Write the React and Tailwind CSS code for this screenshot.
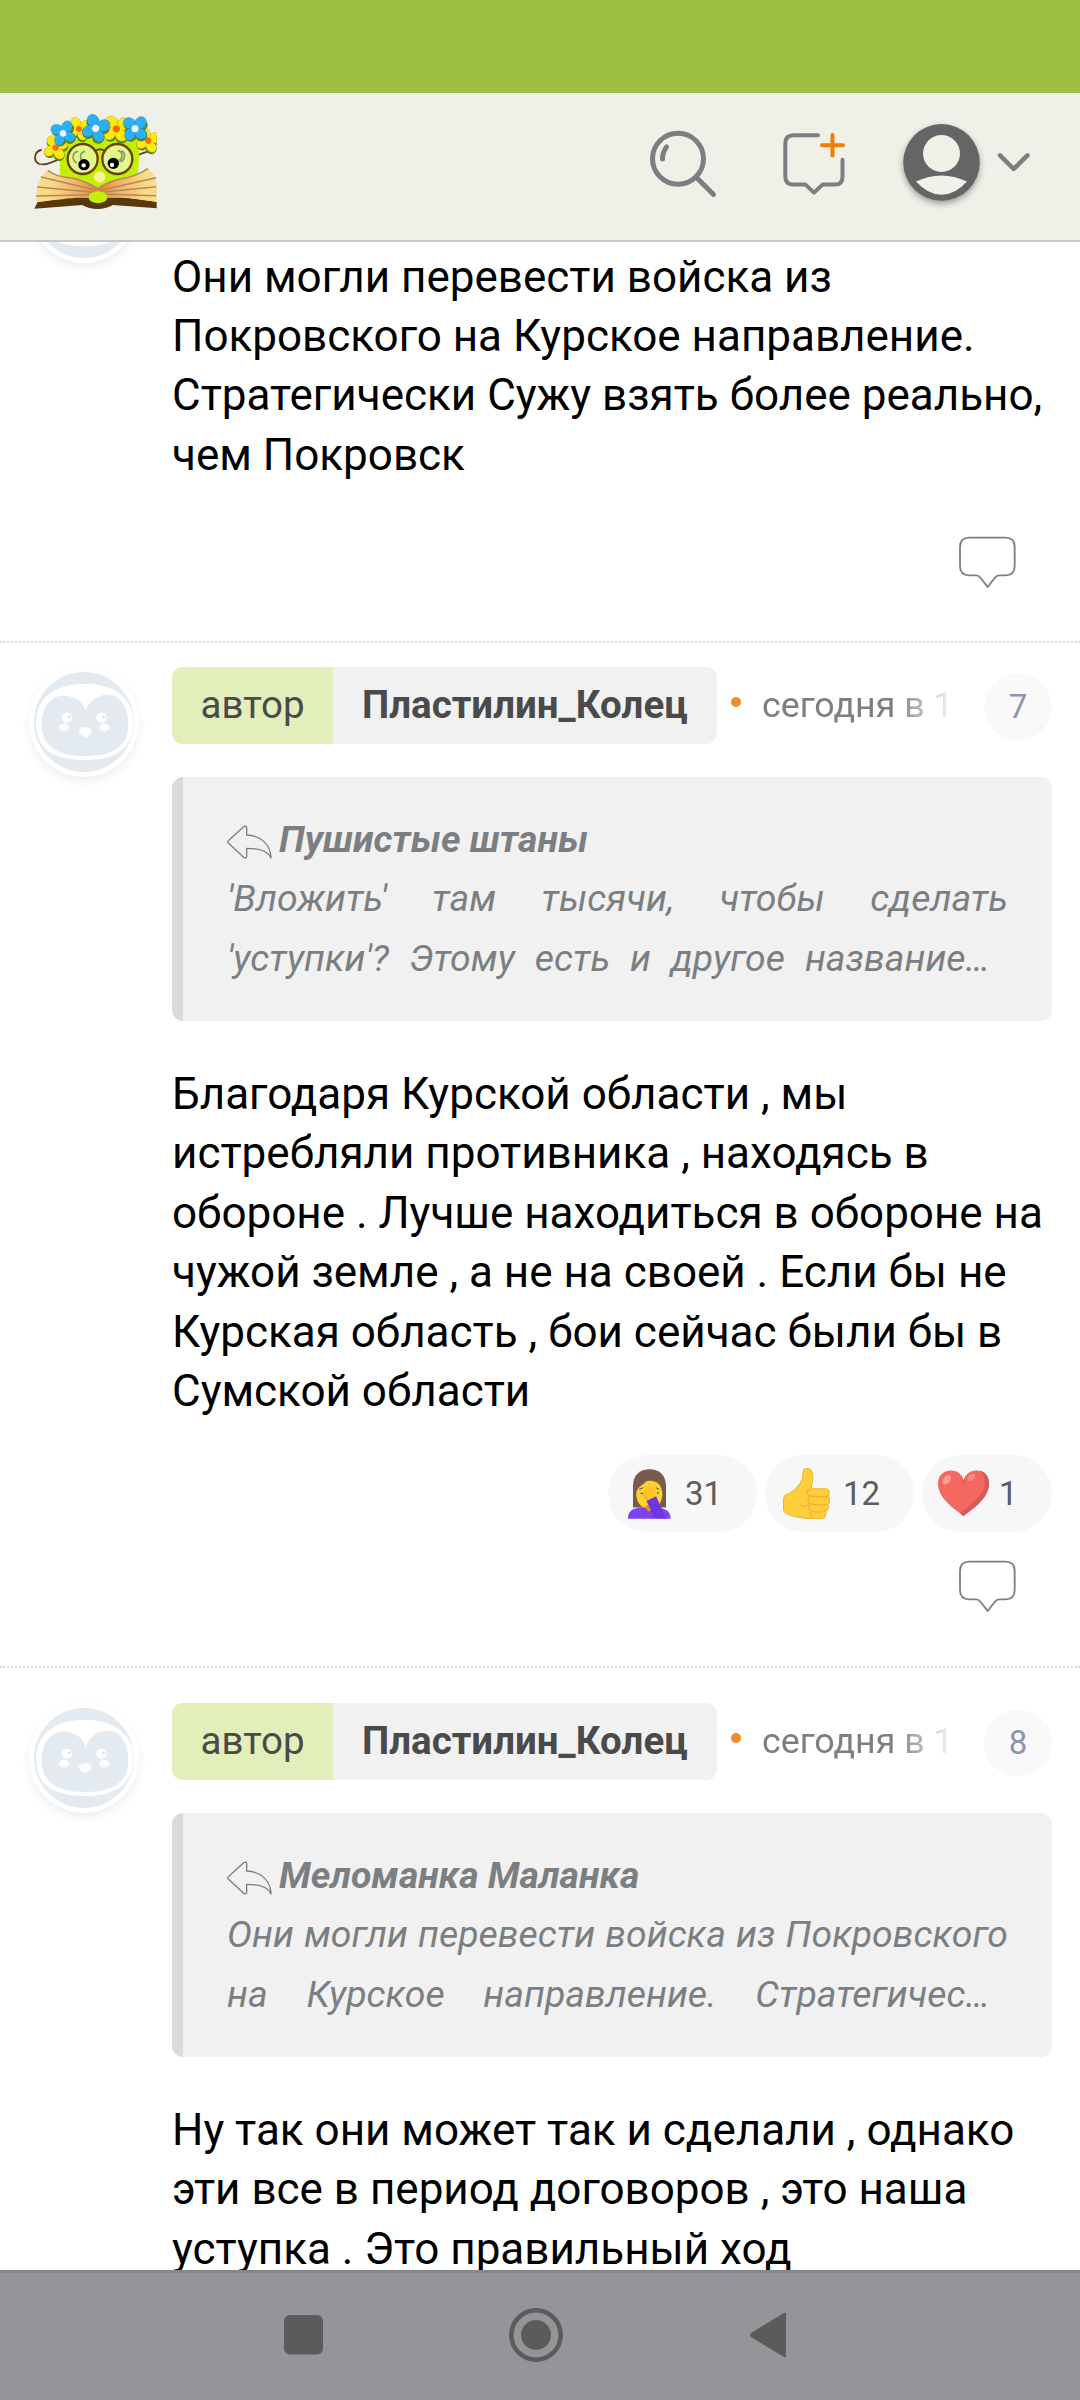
import React from 'react';

const comments = [
  {
    id: 6,
    text: 'Они могли перевести войска из Покровского на Курское направление. Стратегически Сужу взять более реально, чем Покровск',
  },
  {
    id: 7,
    author: 'Пластилин_Колец',
    quote: {
      name: 'Пушистые штаны',
      first: "'Вложить' там тысячи, чтобы сделать",
      last: "'уступки'? Этому есть и другое название…",
    },
    text: 'Благодаря Курской области , мы истребляли противника , находясь в обороне . Лучше находиться в обороне на чужой земле , а не на своей . Если бы не Курская область , бои сейчас были бы в Сумской области',
  },
  {
    id: 8,
    author: 'Пластилин_Колец',
    quote: {
      name: 'Меломанка Маланка',
      first: 'Они могли перевести войска из Покровского',
      last: 'на Курское направление. Стратегичес…',
    },
    text: 'Ну так они может так и сделали , однако эти все в период договоров , это наша уступка . Это правильный ход',
  },
];

const Flower = ({ x, y, color, center, rotate = 0, s = 1 }) => (
  <g transform={`translate(${x} ${y}) rotate(${rotate}) scale(${s})`}>
    <g fill="#5c8a1c" transform="translate(2 4)">
      <ellipse cx="-16" cy="-14" rx="18" ry="16" />
      <ellipse cx="16" cy="-14" rx="18" ry="16" />
      <ellipse cx="-14" cy="16" rx="17" ry="17" />
      <ellipse cx="16" cy="15" rx="17" ry="17" />
    </g>
    <g fill={color} stroke="#000" strokeOpacity="0.18" strokeWidth="2">
      <ellipse cx="-16" cy="-15" rx="18" ry="16" transform="rotate(30 -16 -15)" />
      <ellipse cx="16" cy="-17" rx="16" ry="18" transform="rotate(30 16 -17)" />
      <ellipse cx="-14" cy="16" rx="15" ry="18" transform="rotate(30 -14 16)" />
      <ellipse cx="16" cy="14" rx="18" ry="15" transform="rotate(30 16 14)" />
    </g>
    <circle r="14" fill={color} />
    <circle r="9.5" fill={center} />
  </g>
);

const Logo = () => (
  <svg className="h-[98px] w-[125px]" viewBox="100 95 375 294">
    <defs>
      <radialGradient id="pages" gradientUnits="userSpaceOnUse" cx="295" cy="325" r="150">
        <stop offset="0" stopColor="#f47a20" />
        <stop offset="0.45" stopColor="#f9b262" />
        <stop offset="1" stopColor="#fbdc85" />
      </radialGradient>
      <clipPath id="logoClip">
        <rect x="100" y="95" width="371" height="294" />
      </clipPath>
    </defs>
    <g clipPath="url(#logoClip)">
      <path d="M124 209c-15 3-20 18-17 29 4 14 20 16 34 13l60-22M400 229l45-16" fill="none" stroke="#6b3f16" strokeWidth="5.5" strokeLinecap="round" />
      <path d="M182 175h236v60l-5 60-118 30-115-30z" fill="#c3ef04" />
      <circle cx="249" cy="236" r="45" fill="#e3f68c" stroke="#6b3f0a" strokeWidth="7" />
      <circle cx="353" cy="236" r="45" fill="#e3f68c" stroke="#6b3f0a" strokeWidth="7" />
      <path d="M289 211q12-9 24 0" fill="none" stroke="#6b3f0a" strokeWidth="6" />
      <path d="M236 213c-20 2-20 28-4 35M256 213c-18 4-16 24-5 32M354 211c18 2 15 24 4 30M366 211c13 8 10 28-4 33" fill="none" stroke="#879c60" strokeWidth="5" />
      <circle cx="253" cy="253" r="17" />
      <circle cx="252" cy="255" r="6.500" fill="#fff" />
      <circle cx="341" cy="249" r="17" />
      <circle cx="337" cy="254" r="6.500" fill="#fff" />
      <path d="M104 385l10-21 110-14 72 2 70-2 106 14v20l-132-10q-22 12-47 12t-45-12z" fill="#59380c" />
      <path d="M144 270c30 22 55 20 84 25 25 8 48 18 67 30 16-12 40-22 64-28 26-4 55-12 86-32 14 12 24 30 28 50v50c-40-6-80-12-110-13l-66 0-66 0c-35 3-80 8-120 14-5-40 8-75 33-96z" fill="url(#pages)" />
      <path d="M144 270c30 22 55 20 84 25 25 8 48 18 67 30 16-12 40-22 64-28 26-4 55-12 86-32M124 290l166 40M112 320l170 16M109 347l160-4M470 292l-168 38M470 319l-166 17M470 346l-150-4" fill="none" stroke="#a58d6c" strokeWidth="4.500" />
      <circle cx="300" cy="290" r="17" fill="#fbf19b" />
      <ellipse cx="295" cy="351" rx="28" ry="18" fill="#c3ef04" />
      <Flower x={168} y={202} color="#ffe713" center="#fb6a00" rotate={20} s={0.98} />
      <Flower x={238} y={146} color="#ffe713" center="#fb6a00" rotate={20} s={0.95} />
      <Flower x={190} y={159} color="#2bb0f7" center="#fff" rotate={-12} />
      <Flower x={350} y={146} color="#ffe713" center="#fb6a00" rotate={12} s={1.12} />
      <Flower x={288} y={144} color="#2bb0f7" center="#fff" rotate={28} s={1.1} />
      <Flower x={446} y={181} color="#ffe713" center="#fb6a00" rotate={24} s={0.98} />
      <Flower x={406} y={145} color="#2bb0f7" center="#fff" s={1.06} />
    </g>
  </svg>
);

const Avatar = ({ className }) => (
  <div className={`h-[110px] w-[110px] shrink-0 rounded-full bg-white shadow-[0_4px_9px_rgba(0,0,0,0.07)] ${className || ''}`}>
    <svg className="h-full w-full" viewBox="87 129 330 330">
      <circle cx="252" cy="294" r="150" fill="#e3ebf0" />
      <path d="M254 179C340 179 400 222 400 292C400 372 350 408 256 408C162 408 108 376 108 296C108 220 168 179 254 179Z" fill="#fff" />
      <path d="M257 262C265 232 292 212 322 212C362 212 385 252 385 302C385 366 340 396 256 396C172 396 125 366 125 304C125 250 150 215 190 215C226 215 250 234 257 262Z" fill="#e3ebf0" />
      <g fill="#fff">
        <circle cx="201" cy="281" r="15.500" />
        <circle cx="304" cy="281" r="15.500" />
        <ellipse cx="192" cy="311" rx="15.500" ry="11.500" />
        <ellipse cx="313" cy="311" rx="15.500" ry="11.500" />
        <path d="M237 320c0-14 37-14 37 0 0 9-11 19-18 19s-19-10-19-19z" />
      </g>
      <circle cx="208" cy="279" r="4" fill="#d5dfe5" />
      <circle cx="311" cy="279" r="4" fill="#d5dfe5" />
    </svg>
  </div>
);

const ReplyIcon = () => (
  <svg className="mt-[15px] h-[35px] w-[46px]" viewBox="680 603 138 105" fill="none" stroke="#7b7f80" strokeWidth="4" strokeLinejoin="round">
    <path d="M684 650l45-41q10-7 10 3v21c40 2 72 26 73 69-8-20-38-29-73-29v22q0 10-9 5l-46-43q-4-4 0-7z" />
  </svg>
);

const BubbleIcon = ({ className }) => (
  <svg className={`h-[52px] w-[57px] ${className}`} viewBox="1106 392 171 156" fill="none" stroke="#7b7f80" strokeWidth="5.500" strokeLinejoin="round">
    <path d="M1137 397h108q28 0 28 28v57q0 28-28 28h-18q-8 0-14 8l-21 27-21-27q-6-8-14-8h-20q-28 0-28-28v-57q0-28 28-28z" />
  </svg>
);

const Facepalm = () => (
  <svg className="h-[50px] w-[43px]" viewBox="114 116 130 150">
    <path d="M129 232v-65c0-34 22-51 50-51s50 17 50 51v65z" fill="#795a4d" />
    <path d="M139 190c0-20 20-24 28-36 14-8 50-4 51 36 0 30-18 46-39 46s-40-16-40-46z" fill="#fdd12f" />
    <path d="M168 225h20v20h-20z" fill="#e59a00" />
    <path d="M114 266c0-26 16-34 51-35l12 14 14-14c34 1 52 10 52 35z" fill="#7e42f5" />
    <path d="M148 177l12-5M199 172l9 5M151 188q5 4 9 0M201 188q4 3 7-2" stroke="#5a4932" strokeWidth="3" fill="none" />
    <path d="M165 206l-6-26 7 5-1-24 8 17 2-23 8 22 7-18 1 22 9-11-4 28-11 12z" fill="#ffc324" />
    <path d="M160 191l16 22" stroke="#c98a10" strokeWidth="2" />
    <path d="M170 212l29-14 30 67h-34z" fill="#6f35e3" />
  </svg>
);

const ThumbUp = () => (
  <svg className="h-[51px] w-[47px]" viewBox="580 113 139 152">
    <path d="M581 206c0-12 8-13 17-17 18-9 30-23 38-40 5-12-2-33 12-34 16-2 22 14 20 31-1 11-5 21-4 29h42c12 0 15 18 7 23 9 5 8 21-1 24 6 6 3 18-6 20 4 7 0 21-9 21-35 4-74-1-95-9-14-5-21-9-21-17z" fill="#fece3b" stroke="#eeb52f" strokeWidth="3" />
    <path d="M713 197c-16 3-34 3-50-1M711 221c-16 3-34 3-49-1M707 242c-15 3-32 3-46-1M659 176c-14 7-8 18 2 21-12 8-8 20 1 24-10 6-6 16 2 20-6 6-4 14 5 20" fill="none" stroke="#efb02f" strokeWidth="3.500" />
    <path d="M630 223c11 6 20 6 26-2" fill="none" stroke="#edb22e" strokeWidth="3.500" />
  </svg>
);

const Heart = () => (
  <svg className="h-[47px] w-[51px]" viewBox="1044 120 153 140">
    <path d="M1121 258c-18-16-77-49-77-97 0-28 20-40 39-40 21 0 34 14 38 31 4-17 17-31 38-31 20 0 38 14 38 40 0 48-59 81-76 97z" fill="#f5685f" />
    <path d="M1170 122c17 3 27 18 27 39 0 48-59 81-76 97-5-4-8-7-12-9 32-24 78-56 75-98-1-13-7-22-14-29z" fill="#d75a5b" />
    <path d="M1113 133l8 19 7-16-7 30z" fill="#d95358" />
    <ellipse cx="1070" cy="149" rx="10" ry="17" fill="#ff9c93" transform="rotate(38 1070 149)" />
    <ellipse cx="1144" cy="142" rx="8" ry="13" fill="#fc8c85" transform="rotate(48 1144 142)" />
  </svg>
);

const Header = () => (
  <header className="flex h-[149px] shrink-0 items-start border-b-2 border-[#c9c9c9] bg-[#eff0e8] pl-[33px]">
    <div className="mt-[19px] flex-1">
      <Logo />
    </div>
    <svg className="h-[147px] w-[480px]" viewBox="600 93 480 147" fill="none" stroke="#7b7f81" strokeWidth="5" strokeLinecap="round" strokeLinejoin="round">
      <circle cx="678" cy="158.700" r="25.500" />
      <path d="M696 177l17.500 17.500M662.500 159q0-7 4-12" />
      <path d="M818 135.200h-24.500q-8.200 0-8.200 8.200v33q0 8.200 8.200 8.200h12l8.500 8 8.500-8h13q7 0 7-8v-16.800" strokeWidth="4" />
      <path d="M832.500 135v20.500M822 145.300h21" stroke="#ef7d0b" strokeWidth="4" />
      <g stroke="none">
        <circle className="drop-shadow-[0_3px_3px_rgba(0,0,0,0.35)]" cx="941.500" cy="162.400" r="38.300" fill="#656565" />
        <circle cx="941.500" cy="153.500" r="18.500" fill="#f0f1e9" />
        <path d="M916 181.500Q941.500 169.500 967 181.500Q955 194.800 941.500 194.800T916 181.500Z" fill="#f0f1e9" />
      </g>
      <path d="M1000 155.300l13.700 13.700 13.700-13.700" strokeWidth="4.500" />
    </svg>
  </header>
);

const AuthorRow = ({ name, number }) => (
  <div className="flex h-[77px] items-center">
    <div className="flex h-full overflow-hidden rounded-[11px] bg-[#f1f1f1] text-[38.5px] leading-[75px] text-[#4a4a4a]">
      <span className="w-[161px] bg-[#e2efbb] text-center">автор</span>
      <span className="w-[384px] whitespace-nowrap pl-[29px] font-bold">{name}</span>
    </div>
    <span className="-mt-2 ml-[14px] h-[10px] w-[10px] rounded-full bg-[#f28c28]" />
    <div className="ml-[21px] mt-[1px] w-[194px] whitespace-nowrap text-[35.75px] text-[#7b7f81] [mask-image:linear-gradient(to_right,black_68%,transparent_100%)]">
      сегодня в 1
    </div>
    <span className="ml-auto mt-[3px] flex h-[66px] w-[68px] items-center justify-center rounded-full bg-[#f9f9f9] text-[33px] text-[#8c95ad]">
      {number}
    </span>
  </div>
);

const Quote = ({ quote }) => (
  <div className="mt-[33px] h-[244.4px] rounded-[11px] border-l-[11px] border-[#dadada] bg-[#f1f1f1] px-[44px] py-[33px] text-[37.4px] italic text-[#7b7f81]">
    <div className="flex h-[59.4px] gap-[6px]">
      <ReplyIcon />
      <b>{quote.name}</b>
    </div>
    <p className="whitespace-nowrap [text-align-last:justify]">{quote.first}</p>
    <p className="mr-[18px] whitespace-nowrap [text-align-last:justify]">{quote.last}</p>
  </div>
);

const Reaction = ({ count, children, className }) => (
  <div className={`flex h-[77px] items-center rounded-full bg-[#f7f7f7] text-[33px] text-[#5c5c5c] ${className}`}>
    {children}
    {count}
  </div>
);

const NavBar = () => (
  <nav className="h-[130px] shrink-0 border-t-[3px] border-[#86858b] bg-[#969499]">
    <svg className="h-[127px] w-full" viewBox="0 2273 1080 127" fill="#5b5b5b">
      <rect x="284" y="2315" width="39" height="39.500" rx="6" />
      <circle cx="536" cy="2335" r="24.700" fill="none" stroke="#5b5b5b" strokeWidth="4.500" />
      <circle cx="536" cy="2335" r="15" />
      <path d="M752 2333.500L785 2313.500V2356.500L752 2336.500Q750 2335 752 2333.500Z" stroke="#5b5b5b" strokeWidth="2" strokeLinejoin="round" />
    </svg>
  </nav>
);

const App = () => {
  const [first, second, third] = comments;

  return (
    <div className="flex h-[2400px] w-[1080px] flex-col overflow-hidden bg-white font-['Roboto',sans-serif] text-[44px] leading-[59.4px] text-black">
      <div className="h-[93px] shrink-0 bg-[#9dc043]" />
      <Header />

      <main className="min-h-0 flex-1 overflow-hidden">
        <article className="flex h-[399px] pl-[29px] pr-[28px]">
          <Avatar className="mt-[-89px]" />
          <div className="ml-[33px] flex-1 pt-[5.5px]">
            <p>{first.text}</p>
            <BubbleIcon className="ml-auto mr-[36px] mt-[50.5px]" />
          </div>
        </article>

        <article className="flex h-[1025px] border-t-2 border-dotted border-[#dcdcdc] pl-[29px] pr-[28px] pt-[24px]">
          <Avatar />
          <div className="ml-[33px] flex-1">
            <AuthorRow name={second.author} number={second.id} />
            <Quote quote={second.quote} />
            <p className="mt-[43.5px]">{second.text}</p>
            <div className="mt-[34px] flex justify-end gap-2">
              <Reaction count={31} className="w-[149px] gap-[14px] pl-[20px]">
                <Facepalm />
              </Reaction>
              <Reaction count={12} className="w-[149px] gap-[13px] pl-[18px]">
                <ThumbUp />
              </Reaction>
              <Reaction count={1} className="w-[130px] gap-[10px] pl-[16px]">
                <Heart />
              </Reaction>
            </div>
            <BubbleIcon className="ml-auto mr-[36px] mt-[28px]" />
          </div>
        </article>

        <article className="flex border-t-2 border-dotted border-[#dcdcdc] pl-[29px] pr-[28px] pt-[35px]">
          <Avatar />
          <div className="ml-[33px] flex-1">
            <AuthorRow name={third.author} number={third.id} />
            <Quote quote={third.quote} />
            <p className="mt-[43.5px]">{third.text}</p>
          </div>
        </article>
      </main>

      <NavBar />
    </div>
  );
};

export default App;
